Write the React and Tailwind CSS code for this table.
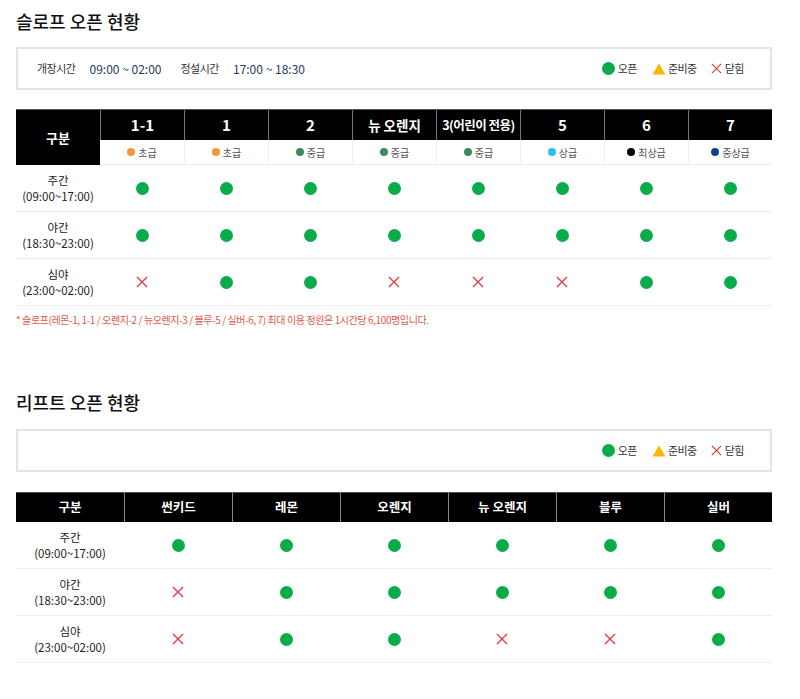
import React from "react";

const font = { fontFamily: '"Noto Sans CJK KR", "Noto Sans", sans-serif' };

function Dot() {
  return <span className="inline-block w-[13px] h-[13px] rounded-full bg-[#0aab4b]" />;
}
function Cross({ size = 12 }) {
  return (
    <svg width={size} height={size} viewBox="0 0 12 12" className="inline-block">
      <path d="M1 1L11 11M11 1L1 11" stroke="#e0393e" strokeWidth="1.3" fill="none" />
    </svg>
  );
}
function Tri() {
  return (
    <svg width="14" height="12" viewBox="0 0 14 12" className="inline-block">
      <path d="M7 0.5L13.5 11.5H0.5Z" fill="#f6b800" />
    </svg>
  );
}

function Legend({ showHours, top }) {
  return (
    <div className={`${top} h-[43px] border-2 border-[#e4e4e4] flex items-center justify-between pl-[19px] pr-[26px] text-[11px] text-[#333]`}>
      <div className="flex items-center">
        {showHours && (
          <>
            <span className="tracking-[-0.5px]">개장시간</span>
            <span className="ml-[14px] text-[12px] text-[#1d3a5c]">09:00 ~ 02:00</span>
            <span className="ml-[19px] tracking-[-0.5px]">정설시간</span>
            <span className="ml-[14px] text-[12px] text-[#1d3a5c]">17:00 ~ 18:30</span>
          </>
        )}
      </div>
      <div className="flex items-center tracking-[-0.5px]">
        <span className="w-[13px] h-[13px] rounded-full bg-[#0aab4b]" />
        <span className="ml-[3px]">오픈</span>
        <span className="ml-[15px] flex"><Tri /></span>
        <span className="ml-[2px]">준비중</span>
        <span className="ml-[14px] flex"><Cross size={11} /></span>
        <span className="ml-[3px]">닫힘</span>
      </div>
    </div>
  );
}

const slopes = [
  { name: "1-1", level: "초급", color: "#f7943a" },
  { name: "1", level: "초급", color: "#f7943a" },
  { name: "2", level: "중급", color: "#3c8a5e" },
  { name: "뉴 오렌지", level: "중급", color: "#3c8a5e" },
  { name: "3(어린이 전용)", level: "중급", color: "#3c8a5e" },
  { name: "5", level: "상급", color: "#25c1ee" },
  { name: "6", level: "최상급", color: "#000000" },
  { name: "7", level: "중상급", color: "#133e8c" },
];

const times = [
  ["주간", "(09:00~17:00)"],
  ["야간", "(18:30~23:00)"],
  ["심야", "(23:00~02:00)"],
];

const slopeData = [
  [1, 1, 1, 1, 1, 1, 1, 1],
  [1, 1, 1, 1, 1, 1, 1, 1],
  [0, 1, 1, 0, 0, 0, 1, 1],
];

const lifts = ["썬키드", "레몬", "오렌지", "뉴 오렌지", "블루", "실버"];
const liftData = [
  [1, 1, 1, 1, 1, 1],
  [0, 1, 1, 1, 1, 1],
  [0, 1, 1, 0, 0, 1],
];

function TimeLabel({ t }) {
  return (
    <div className="flex flex-col items-center text-[11.5px] leading-[16px] text-[#222]">
      <span>{t[0]}</span>
      <span>{t[1]}</span>
    </div>
  );
}

export default function App() {
  return (
    <div className="bg-white w-[800px] h-[699px] overflow-hidden" style={font}>
      <div className="ml-[16px] w-[756px] pt-[8px]">
        <h2 className="text-[18px] leading-[26px] text-[#111] font-medium">슬로프 오픈 현황</h2>
        <Legend showHours top="mt-[13px]" />

        <div className="mt-[19px]">
          <div className="grid grid-cols-9">
            <div className="row-span-2 bg-black text-white font-bold text-[13px] flex items-center justify-center border-t border-[#555]">구분</div>
            {slopes.map((s) => (
              <div
                key={s.name}
                className={`h-[31px] bg-black text-white font-bold flex items-center justify-center whitespace-nowrap border-t border-[#555] border-l border-l-[#777] ${
                  s.name.length > 5 ? "text-[12.5px] tracking-[-0.5px]" : s.name.length > 3 ? "text-[13.5px]" : "text-[15px]"
                }`}
              >
                {s.name}
              </div>
            ))}
            {slopes.map((s, i) => (
              <div
                key={"l" + i}
                className={`h-[25px] flex items-center justify-center text-[10px] text-[#555] border-b border-[#eee] ${i > 0 ? "border-l border-l-[#eee]" : ""}`}
              >
                <span className="w-[8px] h-[8px] rounded-full mr-[3px]" style={{ background: s.color }} />
                {s.level}
              </div>
            ))}
          </div>
          {times.map((t, r) => (
            <div key={r} className="grid grid-cols-9 h-[47px] border-b border-[#eee] items-center">
              <TimeLabel t={t} />
              {slopeData[r].map((v, c) => (
                <div key={c} className="flex justify-center items-center">
                  {v ? <Dot /> : <Cross />}
                </div>
              ))}
            </div>
          ))}
          <p className="mt-[6px] text-[10px] tracking-[-0.4px] text-[#e0574a]">
            * 슬로프(레몬-1, 1-1 / 오렌지-2 / 뉴오렌지-3 / 블루-5 / 실버-6, 7) 최대 이용 정원은 1시간당 6,100명입니다.
          </p>
        </div>

        <h2 className="mt-[62px] text-[18px] leading-[26px] text-[#111] font-medium">리프트 오픈 현황</h2>
        <Legend top="mt-[14px]" />

        <div className="mt-[20px]">
          <div className="grid grid-cols-7 h-[30px] bg-black">
            {["구분", ...lifts].map((n, i) => (
              <div
                key={n}
                className={`flex items-center justify-center text-white font-bold text-[12.5px] border-t border-[#555] ${i > 0 ? "border-l border-l-[#888]" : ""}`}
              >
                {n}
              </div>
            ))}
          </div>
          {times.map((t, r) => (
            <div key={r} className="grid grid-cols-7 h-[47px] border-b border-[#eee] items-center">
              <TimeLabel t={t} />
              {liftData[r].map((v, c) => (
                <div key={c} className="flex justify-center items-center">
                  {v ? <Dot /> : <Cross />}
                </div>
              ))}
            </div>
          ))}
        </div>
      </div>
    </div>
  );
}
